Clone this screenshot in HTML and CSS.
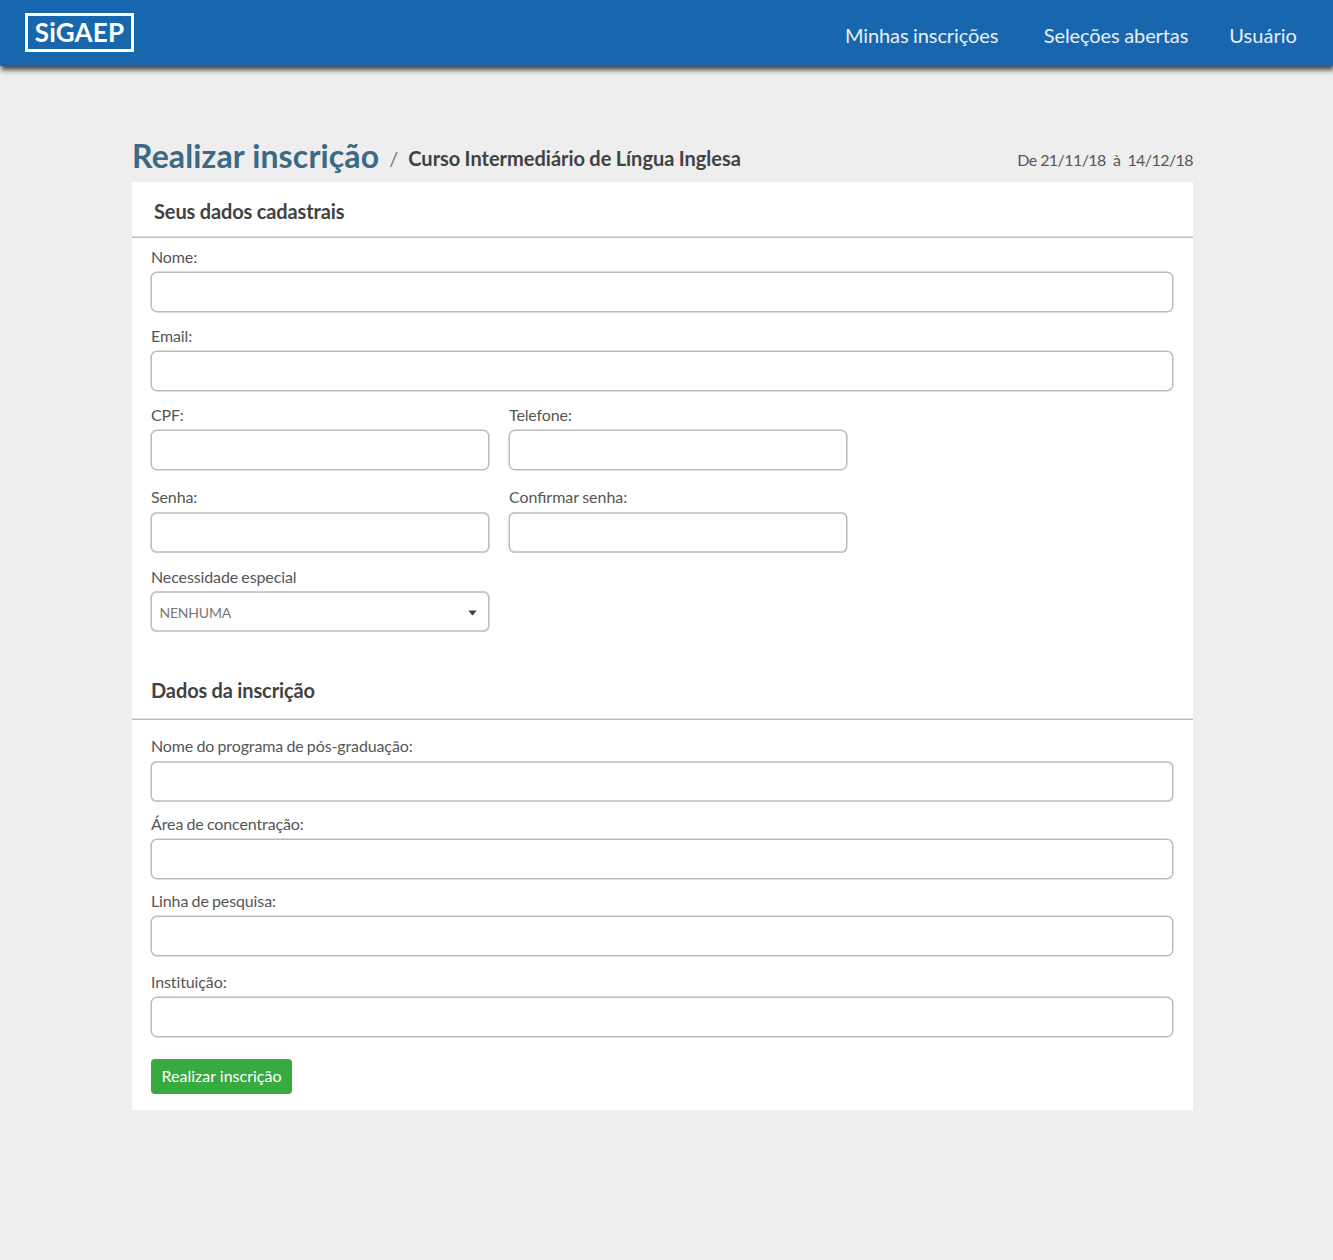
FILE: index.html
```html
<!DOCTYPE html>
<html lang="pt-BR">
<head>
<meta charset="utf-8">
<title>SiGAEP - Realizar inscrição</title>
<link rel="stylesheet" href="styles.css">
</head>
<body>
<header class="topbar">
  <a class="logo">SiGAEP</a>
  <nav class="nav">
    <a class="nav-link">Minhas inscrições</a>
    <a class="nav-link">Seleções abertas</a>
    <a class="nav-link">Usuário</a>
  </nav>
</header>
<main class="page">
  <div class="heading">
    <h1 class="title">Realizar inscrição</h1>
    <span class="slash">/</span>
    <h2 class="course">Curso Intermediário de Língua Inglesa</h2>
    <span class="period">De 21/11/18&nbsp; à&nbsp; 14/12/18</span>
  </div>
  <form class="card">
    <h3 class="section section-first">Seus dados cadastrais</h3>
    <div class="fields">
      <label class="field">Nome:<input class="input"></label>
      <label class="field">Email:<input class="input"></label>
      <div class="row row-contact">
        <label class="field">CPF:<input class="input"></label>
        <label class="field">Telefone:<input class="input"></label>
      </div>
      <div class="row">
        <label class="field">Senha:<input class="input input-soft" type="password"></label>
        <label class="field field-confirm">Confirmar senha:<input class="input input-soft" type="password"></label>
      </div>
      <div class="row">
        <div class="field field-need">Necessidade especial
          <div class="input input-soft select">NENHUMA
            <svg class="caret" width="9" height="6" viewBox="0 0 9 6"><path d="M1 .5h7q.7 0 .3.6L5.1 5q-.6.6-1.2 0L.7 1.1Q.3.5 1 .5z" fill="#424242"/></svg>
          </div>
        </div>
      </div>
    </div>
    <h3 class="section section-second">Dados da inscrição</h3>
    <div class="fields fields-second">
      <label class="field">Nome do programa de pós-graduação:<input class="input input-soft"></label>
      <label class="field">Área de concentração:<input class="input"></label>
      <label class="field field-line">Linha de pesquisa:<input class="input"></label>
      <label class="field">Instituição:<input class="input"></label>
      <button class="submit" type="button">Realizar inscrição</button>
    </div>
  </form>
</main>
</body>
</html>
```
FILE: styles.css
```css
* { box-sizing: border-box; }
body {
  margin: 0;
  min-height: 1260px;
  background: #eeeeee;
  color: #565656;
  font: 16px/20px Lato, sans-serif;
}
h1, h2, h3 { margin: 0; }
.topbar {
  display: flex;
  justify-content: space-between;
  height: 66px;
  padding: 13px 36px 0 25px;
  background: #1766ae;
  box-shadow: 1px 4px 5px rgba(0, 0, 0, .7);
}
.logo {
  width: 109px;
  height: 39px;
  border: 3px solid #fff;
  color: #fff;
  font-size: 26px;
  font-weight: 700;
  line-height: 33px;
  letter-spacing: .15px;
  text-align: center;
}
.nav { display: flex; padding-top: 10px; }
.nav-link { color: #e9eff5; font-size: 20px; line-height: 24px; letter-spacing: -.1px; word-spacing: -.4px; }
.nav-link + .nav-link { margin-left: 45.5px; }
.nav-link:last-child { margin-left: 41px; letter-spacing: .05px; }
.page { width: 1061px; margin: 70px 0 0 132px; }
.heading { display: flex; align-items: flex-start; height: 46px; }
.title { color: #3c6983; font-size: 32px; line-height: 40px; font-weight: 700; letter-spacing: .14px; }
.slash { margin: 12px 0 0 10px; font-size: 20px; color: #777; }
.course { margin: 12px 0 0 10px; color: #424242; font-size: 20px; font-weight: 700; word-spacing: -.6px; }
.period { margin: 14px 0 0 auto; letter-spacing: -.57px; word-spacing: .05px; }
.card { height: 928px; background: #fff; }
.section {
  color: #424242;
  font-size: 20px;
  line-height: 24px;
  letter-spacing: -.1px;
  word-spacing: -.4px;
  border-bottom: 1px solid #bababa;
  box-shadow: inset 0 -1px #dedede;
}
.section-first { height: 56px; padding: 17px 22px 0; }
.fields { padding: 9px 19px 0; }
.field {
  display: flex;
  flex-direction: column;
  gap: 5px;
  margin-bottom: 14px;
  letter-spacing: -.12px;
  word-spacing: -.7px;
}
.field-confirm { letter-spacing: -.05px; word-spacing: -.4px; font-feature-settings: "liga" 1; }
.input {
  width: 1022px;
  height: 40px;
  margin: 0;
  padding: 0 8px;
  border: 1px solid #bababa;
  border-radius: 6px;
  box-shadow: 0 0 0 .5px #bababa;
  background: #fff;
}
.input-soft {
  height: 41px;
  border-top: 2px solid #cbcbcb;
  border-bottom: 2px solid #cbcbcb;
  box-shadow: -.5px 0 #bababa, .5px 0 #bababa;
}
.row { display: flex; gap: 19px; }
.row .field { width: 339px; }
.row .input { width: 338px; }
.row-contact { margin-bottom: 3px; }
.row .field-need { gap: 4px; }
.select {
  display: flex;
  align-items: center;
  justify-content: space-between;
  padding: 2px 11px 0 7.5px;
  color: #777;
  font-size: 14px;
  letter-spacing: -.2px;
}
.section-second { height: 66px; margin-top: 8px; padding: 24px 19px 0; }
.fields-second { padding-top: 16px; }
.fields-second .field { margin-bottom: 12px; }
.fields-second .field-line { margin-bottom: 16px; }
.submit {
  display: block;
  width: 141px;
  height: 35px;
  margin-top: 22px;
  padding: 0 0 2px;
  border: 0;
  border-radius: 4px;
  background: #37aa40;
  color: #fff;
  font: 16px/33px Lato, sans-serif;
}
```
